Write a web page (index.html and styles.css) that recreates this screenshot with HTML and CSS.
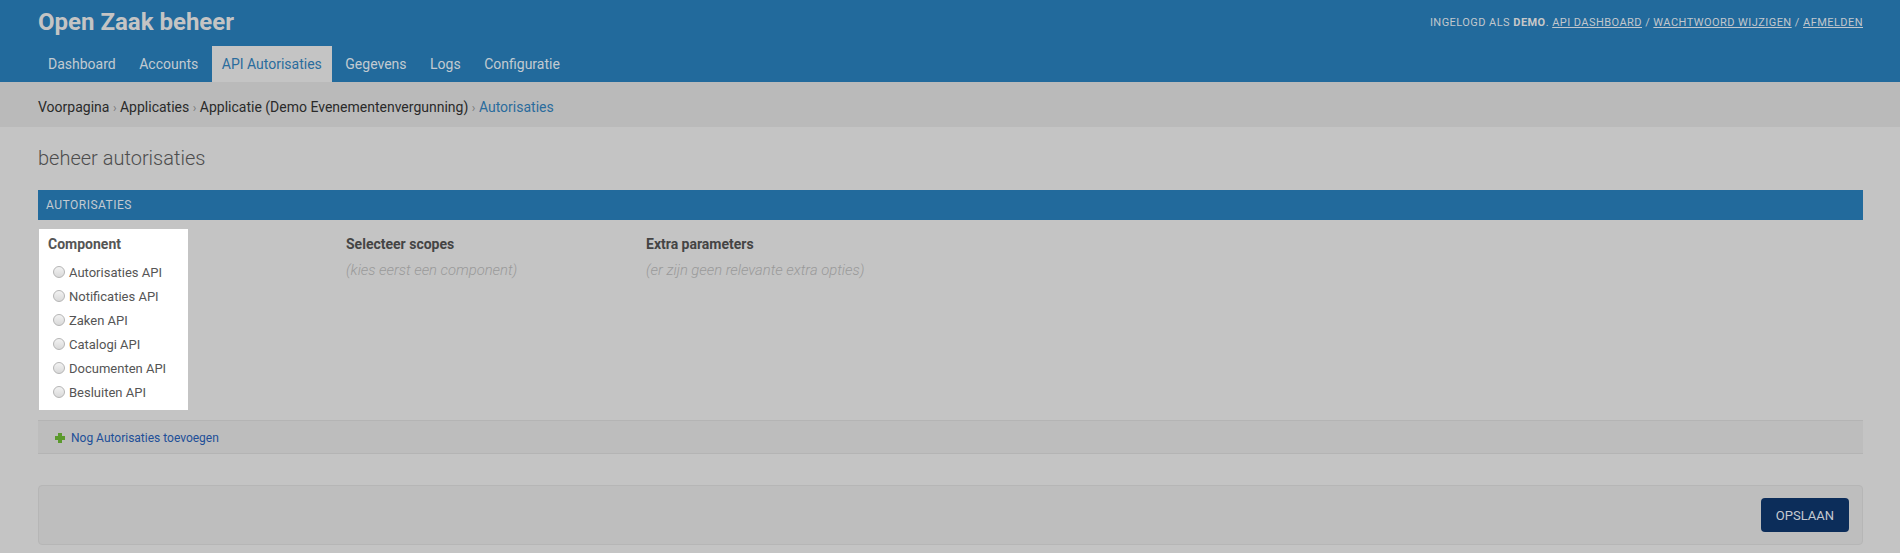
FILE: index.html
```html
<!DOCTYPE html>
<html lang="nl">
<head>
<meta charset="utf-8">
<title>beheer autorisaties | Open Zaak beheer</title>
<link rel="stylesheet" href="styles.css">
</head>
<body>
<header class="header">
  <div class="branding-row">
    <h1 class="site-name">Open Zaak beheer</h1>
    <div class="user-tools">
      INGELOGD ALS <strong>DEMO</strong>. <a href="#">API DASHBOARD</a> / <a href="#">WACHTWOORD WIJZIGEN</a> / <a href="#">AFMELDEN</a>
    </div>
  </div>
  <nav class="nav">
    <a class="nav-tab" href="#">Dashboard</a>
    <a class="nav-tab" href="#">Accounts</a>
    <a class="nav-tab active" href="#">API Autorisaties</a>
    <a class="nav-tab" href="#">Gegevens</a>
    <a class="nav-tab" href="#">Logs</a>
    <a class="nav-tab" href="#">Configuratie</a>
  </nav>
</header>

<div class="breadcrumbs">
  <a href="#">Voorpagina</a> <span class="sep">›</span> <a href="#">Applicaties</a> <span class="sep">›</span> <a href="#">Applicatie (Demo Evenementenvergunning)</a> <span class="sep">›</span> <span class="current">Autorisaties</span>
</div>

<main class="content">
  <h1 class="page-title">beheer autorisaties</h1>

  <section class="module">
    <h2 class="module-caption">Autorisaties</h2>
    <div class="auth-row">
      <div class="col component-box">
        <h3 class="col-title">Component</h3>
        <ul class="radio-list">
          <li><span class="radio"></span>Autorisaties API</li>
          <li><span class="radio"></span>Notificaties API</li>
          <li><span class="radio"></span>Zaken API</li>
          <li><span class="radio"></span>Catalogi API</li>
          <li><span class="radio"></span>Documenten API</li>
          <li><span class="radio"></span>Besluiten API</li>
        </ul>
      </div>
      <div class="col">
        <h3 class="col-title dim">Selecteer scopes</h3>
        <p class="placeholder">(kies eerst een component)</p>
      </div>
      <div class="col">
        <h3 class="col-title dim">Extra parameters</h3>
        <p class="placeholder">(er zijn geen relevante extra opties)</p>
      </div>
    </div>
    <div class="add-row">
      <a href="#" class="add-link"><span class="plus"></span>Nog Autorisaties toevoegen</a>
    </div>
  </section>

  <div class="submit-row">
    <button class="btn-save" type="button">OPSLAAN</button>
  </div>
</main>
</body>
</html>
```
FILE: styles.css
```css
* { box-sizing: border-box; }

html, body {
  margin: 0;
  padding: 0;
  background: #c4c4c4;
  font-family: Roboto, "Liberation Sans", sans-serif;
}

a { text-decoration: none; color: inherit; }

.header {
  background: #226a9c;
  padding: 8px 37px 0 38px;
}

.branding-row {
  display: flex;
  justify-content: space-between;
  align-items: center;
  height: 28px;
}

.site-name {
  margin: 0;
  font-size: 24px;
  line-height: 28px;
  font-weight: 700;
  color: #c4c4c4;
}

.user-tools {
  font-size: 11px;
  letter-spacing: 0.45px;
  color: #c1c7cd;
}
.user-tools strong { font-weight: 700; color: #c8c8c8; }
.user-tools a {
  text-decoration: underline;
  color: #c1c7cd;
}

.nav {
  display: flex;
  gap: 3.5px;
  margin-top: 10px;
}

.nav-tab {
  display: block;
  padding: 0 10px;
  font-size: 14px;
  line-height: 36px;
  color: #c3cad1;
}
.nav-tab.active {
  background: #c4c4c4;
  color: #2a6c9d;
}

.breadcrumbs {
  background: #bababa;
  padding: 16px 38px 10px;
  font-size: 14px;
  line-height: 18px;
  color: #2a2a2a;
}
.breadcrumbs .sep { color: #7a7a7a; font-size: 12px; }
.breadcrumbs .current { color: #2a6c9d; }

.content {
  padding: 19px 37px 0 38px;
}

.page-title {
  margin: 0 0 20px;
  font-size: 20px;
  line-height: 24px;
  font-weight: 300;
  color: #4d4d4d;
}

.module-caption {
  margin: 0;
  height: 30px;
  line-height: 30px;
  padding: 0 8px;
  background: #226a9c;
  color: #c3cad1;
  font-size: 12px;
  font-weight: 400;
  letter-spacing: 0.5px;
  text-transform: uppercase;
}

.auth-row {
  display: grid;
  grid-template-columns: 307px 300px 1fr;
  margin-top: 9px;
  padding-left: 1px;
}

.col {
  padding: 7px 0 7px;
}

.component-box {
  background: #ffffff;
  width: 149px;
  padding: 7px 9px 6px;
}

.col-title {
  margin: 0;
  font-size: 14px;
  line-height: 17px;
  font-weight: 700;
  color: #555555;
}
.col-title.dim { color: #444444; }

.radio-list {
  list-style: none;
  margin: 7px 0 0;
  padding: 0;
}
.radio-list li {
  display: flex;
  align-items: center;
  height: 24px;
  font-size: 13px;
  color: #555555;
}
.radio {
  width: 12px;
  height: 12px;
  border-radius: 50%;
  margin: 0 4px 0 5px;
  border: 1px solid #b5b5b5;
  background: linear-gradient(#f2f2f2, #d9d9d9);
  flex: none;
}

.placeholder {
  margin: 8px 0 0;
  font-size: 14.8px;
  line-height: 18px;
  font-style: italic;
  font-weight: 300;
  color: #9a9a9a;
}

.add-row {
  margin-top: 10px;
  background: #bdbdbd;
  border-top: 1px solid #b4b4b4;
  border-bottom: 1px solid #b4b4b4;
  padding: 2px 17px 0;
  height: 34px;
  display: flex;
  align-items: center;
}
.add-link {
  display: inline-flex;
  align-items: center;
  font-size: 12px;
  line-height: 16px;
  color: #214f98;
}
.plus {
  position: relative;
  width: 10px;
  height: 10px;
  margin-right: 6px;
}
.plus::before, .plus::after {
  content: "";
  position: absolute;
  background: #5b9a2d;
}
.plus::before { left: 0; top: 3px; width: 10px; height: 4px; }
.plus::after { left: 3px; top: 0; width: 4px; height: 10px; }

.submit-row {
  margin-top: 31px;
  display: flex;
  justify-content: flex-end;
  background: #bebebe;
  border: 1px solid #b6b6b6;
  border-radius: 4px;
  padding: 12px 13px;
}

.btn-save {
  height: 34px;
  padding: 0 15px;
  border: none;
  border-radius: 4px;
  background: #0c2d5a;
  color: #c5cad1;
  font-family: Roboto, "Liberation Sans", sans-serif;
  font-size: 13px;
}
```
